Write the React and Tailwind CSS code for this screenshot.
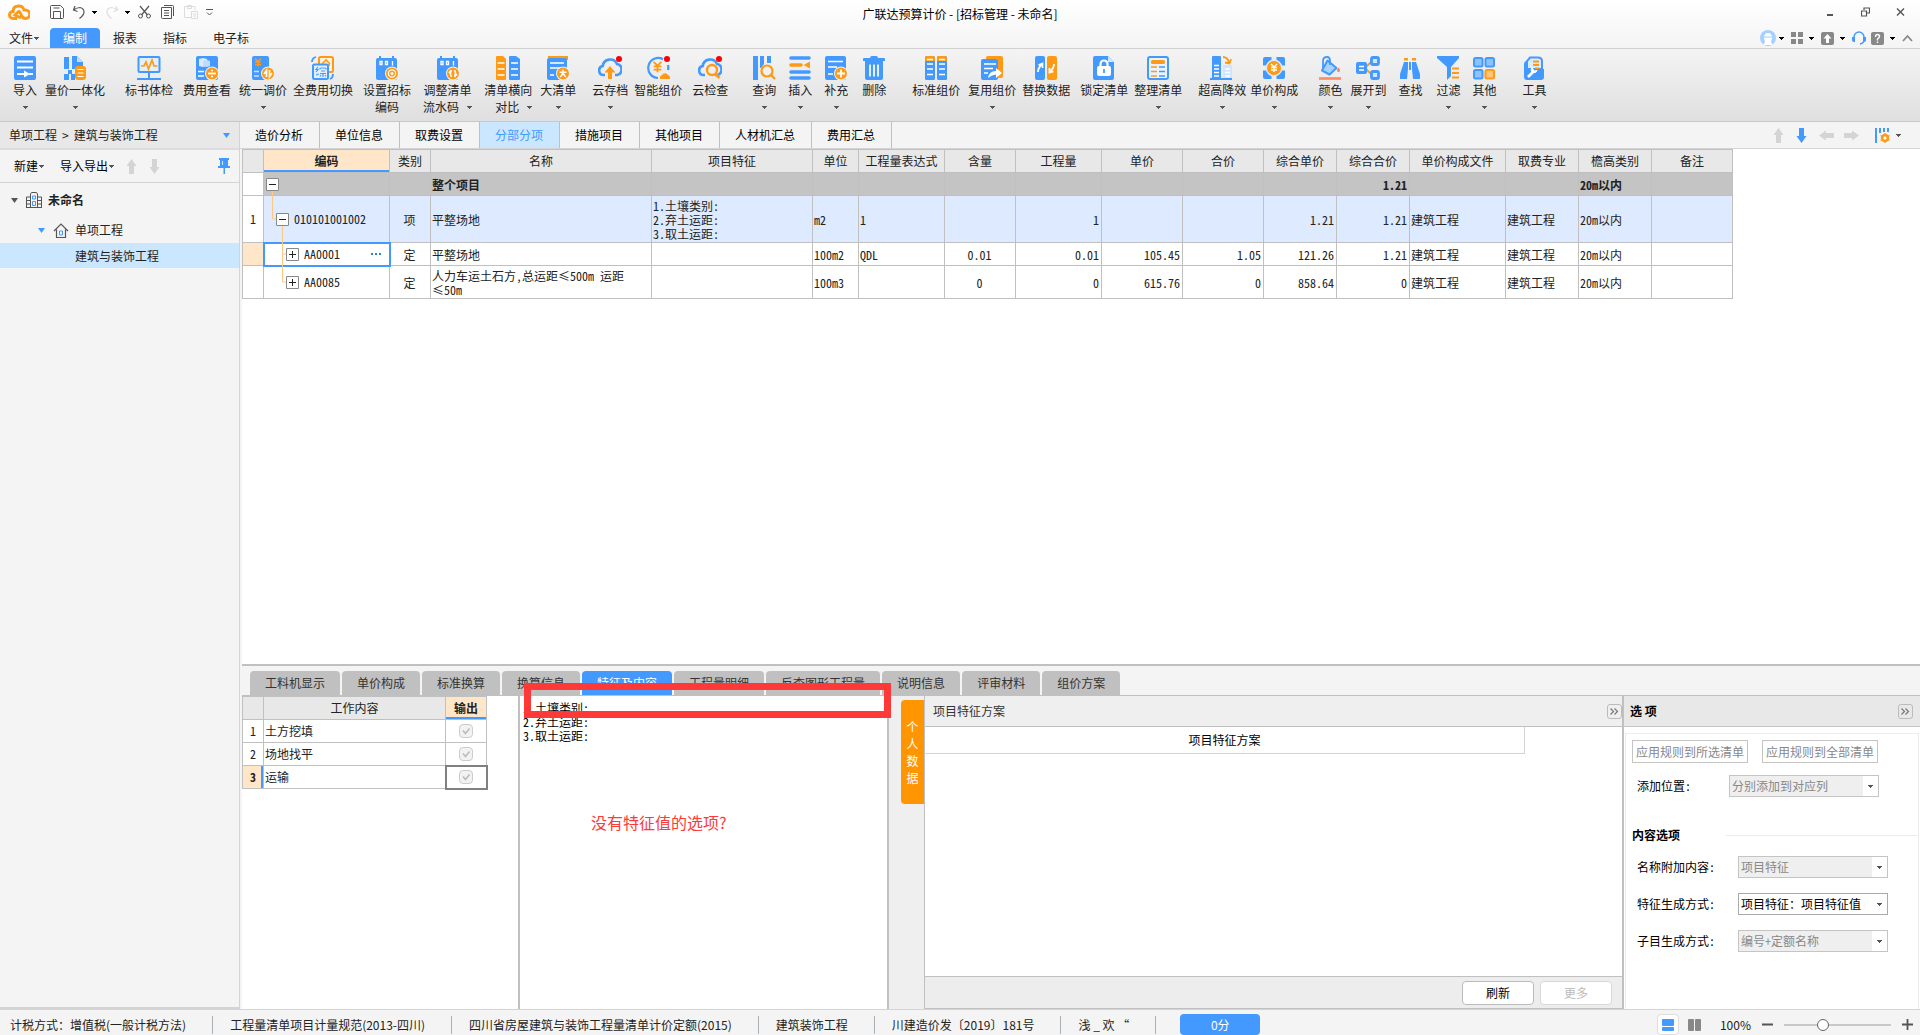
import React, { useState } from "react";

const B = "#4499ff";
const O = "#ff9a17";

/* ---------- shared bits ---------- */

function Caret({ className = "text-[#555]" }) {
  return (
    <svg className={`shrink-0 ${className}`} width="5" height="3" viewBox="0 0 5 3" aria-hidden="true">
      <path d="M0 0h5v1H4v1H3v1H2V2H1V1H0z" fill="currentColor" />
    </svg>
  );
}

function Triangle({ className }) {
  return (
    <svg className={`shrink-0 ${className}`} width="7" height="5" viewBox="0 0 7 5" aria-hidden="true">
      <path d="M0 0h7L3.5 5z" fill="currentColor" />
    </svg>
  );
}

function Arrow({ className = "text-[#d4d4d4]", turn = 0 }) {
  return (
    <svg className={`shrink-0 ${className}`} width="15" height="15" viewBox="0 0 15 15" aria-hidden="true">
      <path
        d="M7.5 0L12.500 7h-2.500v8H5V7H2.500z"
        fill="currentColor"
        transform={`rotate(${turn} 7.5 7.5)`}
      />
    </svg>
  );
}

function Svg({ w = 24, h = 24, children }) {
  return (
    <svg className="block shrink-0" width={w} height={h} viewBox={`0 0 ${w} ${h}`} fill="none" aria-hidden="true">
      {children}
    </svg>
  );
}

// round orange badge in the lower right corner of a ribbon icon
function Badge({ children }) {
  return (
    <>
      <circle cx="17" cy="17.5" r="7" fill="#f2f2f2" />
      <circle cx="17" cy="17.5" r="6" fill={O} />
      {children}
    </>
  );
}

const yen = (x, y, s, color) => (
  <path
    d={`M${x - 3 * s} ${y - 4 * s}L${x} ${y - s}L${x + 3 * s} ${y - 4 * s}M${x} ${y - s}V${y + 4 * s}M${x - 3 * s} ${y - 0.5 * s}H${x + 3 * s}M${x - 3 * s} ${y + 2 * s}H${x + 3 * s}`}
    stroke={color}
    strokeWidth={1.4 * s}
  />
);

const calendar = (
  <>
    <rect x="1" y="2" width="21" height="22" rx="2" fill={B} />
    <path d="M5 0v4M18 0v4" stroke={B} strokeWidth="2" />
    <path d="M5 5.5h2v3H5zM10.5 5.5h2v3h-2zM17.5 5v4.5" stroke="#fff" strokeWidth="1.3" />
  </>
);

const cloud = (
  <path
    d="M7 19H5.5a4.5 4.5 0 0 1-.8-8.9A7.5 7.5 0 0 1 19 8a5.6 5.6 0 0 1 0 11h-2"
    stroke={B}
    strokeWidth="2.6"
  />
);

const redDot = <circle cx="21" cy="3" r="3" fill="#fb0007" />;

const icons = {
  import: (
    <>
      <rect x="1" y="0" width="22" height="24" rx="2" fill={B} />
      <path d="M4 5.500h16M4 11.500h16M4 18h7" stroke="#fff" strokeWidth="1.8" />
      <path d="M11 14.500l6 3.500-6 3.500z" fill="#fff" />
      <path d="M16 18h4" stroke="#fff" strokeWidth="2" />
    </>
  ),
  price: (
    <>
      <path d="M1 1h5v12H1zM1 18h5v6H1zM8 18h4v6H8z" fill={B} />
      <path d="M9 0h5l6 6v4h-5l-3 3H9z" fill={B} />
      <path d="M14 0l6 6h-6z" fill="#bfe0ff" />
      <rect x="5" y="14" width="4" height="4" fill={B} />
      <path d="M7 0v13M0 15.500h4" stroke="#dcecff" strokeWidth="1" />
      <rect x="12" y="10" width="11" height="14" rx="3" fill={O} />
      <path d="M14.500 13.500h6M14.500 17h6M14.500 20.500h6" stroke="#fff" strokeWidth="1.200" />
    </>
  ),
  monitor: (
    <>
      <rect x="1.500" y="1" width="21" height="15" rx="1" fill="#e2effc" stroke={B} strokeWidth="2" />
      <path d="M4 10h3l2-4 2.500 7L15 4l2 6h3.500" stroke={O} strokeWidth="1.700" />
      <path d="M12 16v6M0 23h24" stroke={B} strokeWidth="2" />
    </>
  ),
  feeView: (
    <>
      <rect x="1" y="0" width="22" height="24" rx="2" fill={B} />
      <path d="M4 3l4-1 4 1v7l-4 1-4-1z" fill="#dbeafc" />
      <path d="M8 5l4-1 3 1v5l-3 1-4-1z" fill="#bcdcff" />
      <path d="M3 15.500h6M3 20h6" stroke="#fff" strokeWidth="1.600" />
      <Badge>
        <path d="M13 17.500h8" stroke="#fff" strokeWidth="1.800" />
        <circle cx="17" cy="14.500" r="1.100" fill="#fff" />
        <circle cx="17" cy="20.500" r="1.100" fill="#fff" />
      </Badge>
    </>
  ),
  adjust: (
    <>
      <rect x="1" y="0" width="17" height="24" rx="2" fill={B} />
      {yen(7, 6.5, 1, O)}
      <path d="M3 15.500h5M3 20h5" stroke="#cfe4fb" strokeWidth="1.600" />
      <Badge>
        <path d="M15.500 21v-6.500l-2.500 3.500M18.500 14v6.500L21 17" stroke="#fff" strokeWidth="1.700" />
      </Badge>
    </>
  ),
  swap: (
    <>
      <rect x="8" y="1" width="14" height="15" rx="1.500" fill="#fff3e0" stroke={O} strokeWidth="2" />
      <path d="M11 8l4-4 4 4M12 9h7M15 9v4" stroke={O} strokeWidth="1.600" />
      <rect x="2" y="8.500" width="15" height="14.500" rx="1.500" fill="#e2effc" stroke={B} strokeWidth="2" />
      <path d="M7 11l-2 2.500h2l-2 2.500M5 19l3-1M9.500 12h5M9 12v1.500M15 12v1.500M10 15h4M9 17.500h6M12 17.500V21M10 19l-1 1.500M14 19l1 1.500" stroke={B} strokeWidth="1.200" />
      <path d="M1 6q0-4 4-5M22 18q0 4-3 5" stroke={B} strokeWidth="1.800" />
    </>
  ),
  codeSet: (
    <>
      {calendar}
      <Badge>
        <circle cx="17" cy="17.500" r="3.600" stroke="#fff" strokeWidth="1.200" />
        <circle cx="17" cy="17.500" r="1.500" fill="#fff" />
      </Badge>
    </>
  ),
  codeFlow: (
    <>
      {calendar}
      <Badge>
        <path d="M15.500 21q-2-3.500 0-6.500M13 17l2.500-3M18.500 14q2 3.500 0 6.500M21 18l-2.500 3" stroke="#fff" strokeWidth="1.500" />
      </Badge>
    </>
  ),
  compare: (
    <>
      <path d="M0 1q0-1 1-1h6l3 3v20q0 1-1 1H1q-1 0-1-1z" fill={O} />
      <path d="M13 1q0-1 1-1h6l4 3v20q0 1-1 1h-9q-1 0-1-1z" fill={B} />
      <path d="M1.500 7h7M1.500 13h7M1.500 19h7M15 7h7M15 13h7M15 19h7" stroke="#fff" strokeWidth="1.500" />
    </>
  ),
  bigList: (
    <>
      <path d="M2 0h20v4H2z" fill={O} />
      <rect x="1" y="2" width="20" height="22" rx="2" fill={B} />
      <path d="M4 7h14M4 12h10M4 19h4" stroke="#fff" strokeWidth="1.600" />
      <Badge>
        <path d="M13.500 16.200h7M17 13.500v3q-1 3-3 4.500M17 16.500q1 3 3 4.500" stroke="#fff" strokeWidth="1.400" />
      </Badge>
    </>
  ),
  cloudSave: (
    <>
      {cloud}
      <path d="M12 10l5.500 6.500h-3.500V23h-4v-6.500H6.500z" fill={O} />
      {redDot}
    </>
  ),
  smart: (
    <>
      <path d="M12 22A10 10 0 1 1 17 3.200M22 9a10 10 0 0 1 0 5" stroke={B} strokeWidth="2.200" />
      {yen(11.5, 11, 1.3, O)}
      <path d="M14 23v-2.500l2-1.500a3.500 3.500 0 0 1 6 0l2 1.500V23z" fill={O} />
      {redDot}
    </>
  ),
  cloudCheck: (
    <>
      {cloud}
      <circle cx="14" cy="14" r="6.500" fill="#f0f0f0" />
      <circle cx="14" cy="14" r="5" stroke={O} strokeWidth="2.400" />
      <path d="M17.500 18l4 4" stroke={O} strokeWidth="2.600" />
      {redDot}
    </>
  ),
  query: (
    <>
      <path d="M1 0h5v24H1zM8 0h4v8l-3 4H8zM15 0h4v7h-4z" fill={B} />
      <circle cx="15" cy="15" r="5.500" fill="#f0f0f0" stroke={O} strokeWidth="2.200" />
      <path d="M19 19l4 4" stroke={O} strokeWidth="2.400" />
    </>
  ),
  insert: (
    <>
      <path d="M3 2h18M3 16h18M3 22h18" stroke={B} strokeWidth="3.600" strokeLinecap="round" />
      <path d="M3 9h10" stroke={O} strokeWidth="3.600" strokeLinecap="round" />
      <path d="M22 5.500v7L15.500 9z" fill={O} />
    </>
  ),
  supplement: (
    <>
      <rect x="1" y="0" width="21" height="24" rx="2" fill={B} />
      <path d="M4 5.500h15M4 11h9M4 18h5" stroke="#fff" strokeWidth="1.600" />
      <Badge>
        <path d="M13 17.500h8M17 13.500v8" stroke="#fff" strokeWidth="1.800" />
      </Badge>
    </>
  ),
  trash: (
    <>
      <path d="M8 2q0-2 2-2h4q2 0 2 2h6q1 0 1 1v2H1V3q0-1 1-1z" fill={B} />
      <path d="M3 5h18v17q0 2-2 2H5q-2 0-2-2z" fill={B} />
      <path d="M8 8.500v12M12 8.500v12M16 8.500v12" stroke="#fff" strokeWidth="1.700" />
    </>
  ),
  standard: (
    <>
      <rect x="1" y="0" width="10" height="24" rx="1.500" fill={B} />
      <rect x="13" y="0" width="10" height="24" rx="1.500" fill={B} />
      <path d="M1 5V2q0-2 2-2h6q2 0 2 2v3zM13 5V2q0-2 2-2h6q2 0 2 2v3z" fill={O} />
      <path d="M3 3.500h6M3 8h6M3 13h6M3 18.500h6M15 3.500h6M15 8h6M15 13h6M15 18.500h6" stroke="#fff" strokeWidth="1.400" />
    </>
  ),
  reuse: (
    <>
      <rect x="6" y="0" width="17" height="22" rx="2" fill={O} />
      <rect x="1" y="3" width="17" height="21" rx="2" fill={B} />
      <path d="M4 8h12M4 12.500h9M4 17h4" stroke="#fff" strokeWidth="1.600" />
      <path d="M8 22q1-7 8-7v-3l6 5-6 5v-3.500q-4 0-8 3.500z" fill="#fff" />
    </>
  ),
  replace: (
    <>
      <rect x="1" y="0" width="10" height="24" rx="2" fill={B} />
      <rect x="13" y="0" width="10" height="24" rx="2" fill={O} />
      <path d="M4 16q0-4 4-8M4.500 9L8.500 7.500V12M20 8q0 4-4 8M15.500 12v4.500l4-1" stroke="#fff" strokeWidth="1.800" />
    </>
  ),
  lock: (
    <>
      <path d="M3 0h13l6 6v16q0 2-2 2H3q-2 0-2-2V2q0-2 2-2z" fill={B} />
      <path d="M16 0l6 6h-6z" fill="#cfe6ff" />
      <rect x="5" y="10" width="14" height="10" rx="2" fill="#fff" />
      <path d="M8.500 10V8a3.500 3.500 0 0 1 7 0v2" stroke="#fff" strokeWidth="2.200" />
      <path d="M12 13v4" stroke={B} strokeWidth="1.800" />
    </>
  ),
  tidy: (
    <>
      <rect x="2" y="1" width="20" height="22" rx="2" fill="#e8f3ff" stroke={B} strokeWidth="2" />
      <rect x="5" y="4" width="14" height="4" rx="1.500" fill={O} />
      <path d="M5 11h6M5 15.500h6M5 20h6" stroke={O} strokeWidth="1.700" />
      <path d="M13 11h6M13 15.500h6M13 20h6" stroke={B} strokeWidth="1.700" />
    </>
  ),
  building: (
    <>
      <rect x="2" y="0" width="9" height="23" rx="1" fill={B} />
      <rect x="13" y="9" width="9" height="14" fill="#cfe6ff" />
      <path d="M4 9.500h5M4 13h5M4 16.500h5M4 20h5M15 13h5M15 16.500h5M15 20h5" stroke="#fff" strokeWidth="1.300" />
      <path d="M0 23h22" stroke={B} strokeWidth="2" />
      <path d="M13 1q4.500 0 6 5.500M15 6.500l4.500 1L21 3" stroke={O} strokeWidth="1.800" />
    </>
  ),
  compose: (
    <>
      <path d="M3 1h18q2 0 2 2v18q0 2-2 2H3q-2 0-2-2V3q0-2 2-2z" fill={B} />
      <path d="M9.500 0h5v4h-5zM9.500 20h5v4h-5zM0 9.500h4v5H0zM20 9.500h4v5h-4z" fill="#eee" />
      <circle cx="12" cy="12" r="8.500" fill="#dcebfa" />
      <circle cx="12" cy="12" r="7" fill={O} />
      {yen(12, 12, 1, "#fff")}
    </>
  ),
  color: (
    <>
      <path d="M9.500 4.500L18.500 12l-7 6.500-7.500-4z" fill="#a8d2ff" stroke={B} strokeWidth="2" strokeLinejoin="round" />
      <path d="M5 12V5q0-4 4-4 3 0 3 4v4" stroke={B} strokeWidth="1.800" />
      <path d="M20.500 12q2 3 0 4-2-1 0-4z" fill="#ff7a55" stroke="#ff7a55" />
      <path d="M1 22.500h22" stroke="#ff8866" strokeWidth="2.600" />
    </>
  ),
  expand: (
    <>
      <path d="M9 12l7-7M9 12l7 7" stroke={O} strokeWidth="1.800" />
      <rect x="0" y="6" width="11" height="12" rx="2" fill={B} />
      <path d="M3 10.500h5M3 14h5" stroke="#fff" strokeWidth="1.500" />
      <rect x="15.500" y="1.500" width="7" height="7" rx="1.500" fill="#cfe6ff" stroke={B} strokeWidth="2.800" />
      <rect x="15.500" y="15.500" width="7" height="7" rx="1.500" fill="#cfe6ff" stroke={B} strokeWidth="2.800" />
    </>
  ),
  find: (
    <>
      <path d="M6 2h4v2.500H6zM14 2h4v2.500h-4z" fill={O} />
      <path d="M6 6h4v7l-1 10H2v-5zM14 6h4l4 12v5h-7l-1-10z" fill={B} />
      <path d="M11 6v8h2V6z" fill={B} />
    </>
  ),
  filter: (
    <>
      <path d="M1 0h22v2l-8 9v9l-4 4V11L1 2z" fill={B} />
      <path d="M16 12.500h7M16 17h7M16 21.500h7" stroke={O} strokeWidth="2" />
    </>
  ),
  others: (
    <>
      <rect x="2" y="2" width="8.500" height="8.500" rx="1.500" fill="#8cc3ff" stroke={B} strokeWidth="2" />
      <rect x="13.500" y="2" width="8.500" height="8.500" rx="1.500" fill="#8cc3ff" stroke={B} strokeWidth="2" />
      <rect x="2" y="14" width="8.500" height="8.500" rx="1.500" fill="#8cc3ff" stroke={B} strokeWidth="2" />
      <rect x="13.500" y="14" width="8.500" height="8.500" rx="1.500" fill="#ffc57a" stroke={O} strokeWidth="2" />
    </>
  ),
  tools: (
    <>
      <path d="M8 1.500h8q4 0 4 4V13H5V5z" fill="#dcecff" stroke={B} strokeWidth="2" />
      <path d="M11 5.500h6M11 9h6M13 12.500h4" stroke={O} strokeWidth="1.800" />
      <path d="M2 8q0-3 3-3v8h17v8q0 3-3 3H5q-3 0-3-3z" fill={B} />
      <path d="M6 21l5-5" stroke="#fff" strokeWidth="2.600" />
      <path d="M10 11.500q-2 4 1 5t4-2l-2.500.500-1-1z" fill="#fff" stroke="#fff" />
    </>
  ),
};

/* ---------- title bar + menu ---------- */

const menuTabs = ["编制", "报表", "指标", "电子标"];

function QuickAccess() {
  const btn = "flex items-center";
  return (
    <div className="flex h-6 items-center pl-2 text-[#555]">
      <Svg w={22} h={17}>
        <path
          d="M9 14.500H5a3.500 3.500 0 0 1 0-7q0-5.500 6-5.500 4 0 5 4h1.500a4 4 0 0 1 0 8.500q-3 0-4.500-4T10 8l-3 3 6 3"
          stroke={O}
          strokeWidth="3"
        />
      </Svg>
      <button type="button" aria-label="保存" className={`${btn} ml-5`}>
        <Svg w={14} h={14}>
          <path d="M.5 1.500q0-1 1-1h9l3 3v9q0 1-1 1h-11q-1 0-1-1zM3.500 13V6.500h7V13M3.500 3h6" stroke="currentColor" />
        </Svg>
      </button>
      <button type="button" aria-label="撤销" className={`${btn} ml-2 gap-1.5`}>
        <Svg w={14} h={14}>
          <path d="M3 1L1.500 5 5.500 6.500M1.500 5Q5 2.500 8 2.500q4 1 4 4.500 0 3-4.500 6.500" stroke="currentColor" strokeWidth="1.200" />
        </Svg>
        <Caret className="text-black" />
      </button>
      <button type="button" aria-label="重做" className={`${btn} ml-2 gap-1.5 text-[#ddd]`}>
        <Svg w={14} h={14}>
          <path d="M11 1l1.500 4-4 1.500M12.500 5Q9 2.500 6 2.500 2 3.500 2 7q0 3 4.500 6.500" stroke="currentColor" strokeWidth="1.200" />
        </Svg>
        <Caret className="text-black" />
      </button>
      <button type="button" aria-label="剪切" className={`${btn} ml-2`}>
        <Svg w={13} h={14}>
          <path d="M2 1l7.500 9M11 1L3.500 10" stroke="currentColor" strokeWidth="1.200" />
          <circle cx="2.500" cy="11" r="2" stroke="currentColor" />
          <circle cx="10.500" cy="11" r="2" stroke="currentColor" />
        </Svg>
      </button>
      <button type="button" aria-label="复制" className={`${btn} ml-2.5`}>
        <Svg w={13} h={14}>
          <path d="M3 .5h8.500q1 0 1 1V11M.5 2.500h10v11H1.500q-1 0-1-1zM3 5.500h5M3 8h5M3 10.500h5" stroke="currentColor" />
        </Svg>
      </button>
      <button type="button" aria-label="粘贴" className={`${btn} ml-2.5 text-[#ddd]`}>
        <Svg w={14} h={14}>
          <path d="M7 12.500H.5v-11H11V5M3.500.5h4v3h-4zM7.500 6.500h6v7h-6zM9 9h3M9 11h3" stroke="currentColor" />
        </Svg>
      </button>
      <button type="button" aria-label="自定义" className={`${btn} ml-2`}>
        <Svg w={7} h={7}>
          <path d="M0 .5h7M1 3.500l2.500 2.500L6 3.500" stroke="currentColor" />
        </Svg>
      </button>
    </div>
  );
}

function TitleBar() {
  const [active, setActive] = useState("编制");
  return (
    <header className="border-b border-[#d0d0d0] bg-gradient-to-b from-white to-[#f4f4f4]">
      <div className="grid h-7 grid-cols-[1fr_auto_1fr]">
        <QuickAccess />
        <h1 className="self-center text-black">广联达预算计价 - [招标管理 - 未命名]</h1>
        <div className="flex h-6 items-center justify-end gap-[26px] pr-[15px] text-[#555]">
          <button type="button" aria-label="最小化">
            <Svg w={9} h={10}>
              <path d="M1 8h6" stroke="currentColor" strokeWidth="2" />
            </Svg>
          </button>
          <button type="button" aria-label="还原">
            <Svg w={9} h={10}>
              <path d="M3 3V1h5.500v5H6M.5 4h5v5h-5z" stroke="currentColor" strokeWidth="1.200" />
            </Svg>
          </button>
          <button type="button" aria-label="关闭">
            <Svg w={9} h={10}>
              <path d="M1 1.500l7 7M8 1.500l-7 7" stroke="currentColor" strokeWidth="1.400" />
            </Svg>
          </button>
        </div>
      </div>
      <div className="flex h-5 items-stretch justify-between">
        <nav className="flex text-[#222]">
          <button type="button" className="flex w-[50px] items-center gap-px pl-[9px]">
            文件
            <Caret />
          </button>
          {menuTabs.map((t) => (
            <button
              key={t}
              type="button"
              onClick={() => setActive(t)}
              className={`rounded-t-sm px-[13px] ${t === active ? "bg-[#4499ff] text-white" : ""}`}
            >
              {t}
            </button>
          ))}
        </nav>
        <div className="flex items-center pr-[7px] text-[#888]">
          <button type="button" aria-label="用户" className="flex items-center gap-[3px]">
            <Svg w={16} h={16}>
              <circle cx="8" cy="8" r="8" fill="#a5d0ff" />
              <path d="M4 8q0-5 4-5t4 5l-1 4 2 3H3l2-3z" fill="#fff" />
              <path d="M4 7h8" stroke="#a5d0ff" />
            </Svg>
            <Caret className="text-black" />
          </button>
          <button type="button" aria-label="应用" className="ml-[7px] flex items-center gap-1.5">
            <Svg w={12} h={12}>
              <path d="M0 0h5v5H0zM7 0h5v5H7zM0 7h5v5H0zM7 7h5v5H7z" fill="currentColor" />
            </Svg>
            <Caret className="text-black" />
          </button>
          <button type="button" aria-label="上传" className="ml-[7px] flex items-center gap-1.5">
            <Svg w={13} h={13}>
              <rect width="13" height="13" rx="2" fill="currentColor" />
              <path d="M6.500 2l4 4.500h-2.500V11H5V6.500H2.500z" fill="#fff" />
            </Svg>
            <Caret className="text-black" />
          </button>
          <button type="button" aria-label="客服" className="ml-[7px]">
            <Svg w={14} h={14}>
              <path d="M2 8V6a5 5 0 0 1 10 0v3q0 3-4 4" stroke={B} strokeWidth="1.400" />
              <path d="M0 6h3v5H2q-2 0-2-2zM11 6h3v3q0 2-2 2h-1z" fill={B} />
            </Svg>
          </button>
          <button type="button" aria-label="帮助" className="ml-[5px] flex items-center gap-1.5">
            <Svg w={13} h={13}>
              <rect width="13" height="13" rx="2" fill="currentColor" />
              <path d="M4.500 5q0-2.500 2-2.500t2 2q0 1-2 2.500v1.500M6.500 9.500V11" stroke="#fff" strokeWidth="1.400" />
            </Svg>
            <Caret className="text-black" />
          </button>
          <button type="button" aria-label="收起功能区" className="ml-[7px]">
            <Svg w={11} h={8}>
              <path d="M1 7l4.500-5L10 7" stroke="currentColor" strokeWidth="1.800" />
            </Svg>
          </button>
        </div>
      </div>
    </header>
  );
}

/* ---------- ribbon ---------- */

const ribbon = [
  { icon: "import", label: "导入", caret: true, space: "ml-[13px]" },
  { icon: "price", label: "量价一体化", caret: true, space: "ml-2" },
  { icon: "monitor", label: "标书体检", space: "ml-5" },
  { icon: "feeView", label: "费用查看", space: "ml-2.5" },
  { icon: "adjust", label: "统一调价", caret: true, space: "ml-2" },
  { icon: "swap", label: "全费用切换", space: "ml-1.5" },
  { icon: "codeSet", label: "设置招标", second: "编码", space: "ml-2.5" },
  { icon: "codeFlow", label: "调整清单", second: "流水码", caret: true, space: "ml-3" },
  { icon: "compare", label: "清单横向", second: "对比", caret: true, space: "ml-3" },
  { icon: "bigList", label: "大清单", caret: true, space: "ml-2" },
  { icon: "cloudSave", label: "云存档", caret: true, space: "ml-4" },
  { icon: "smart", label: "智能组价", space: "ml-1.5" },
  { icon: "cloudCheck", label: "云检查", space: "ml-2.5" },
  { icon: "query", label: "查询", caret: true, space: "ml-6" },
  { icon: "insert", label: "插入", caret: true, space: "ml-3" },
  { icon: "supplement", label: "补充", caret: true, space: "ml-3" },
  { icon: "trash", label: "删除", space: "ml-3.5" },
  { icon: "standard", label: "标准组价", space: "ml-6.5" },
  { icon: "reuse", label: "复用组价", caret: true, space: "ml-2" },
  { icon: "replace", label: "替换数据", space: "ml-1.5" },
  { icon: "lock", label: "锁定清单", space: "ml-2.5" },
  { icon: "tidy", label: "整理清单", caret: true, space: "ml-1.5" },
  { icon: "building", label: "超高降效", caret: true, space: "ml-4" },
  { icon: "compose", label: "单价构成", caret: true, space: "ml-1" },
  { icon: "color", label: "颜色", caret: true, space: "ml-5" },
  { icon: "expand", label: "展开到", caret: true, space: "ml-2" },
  { icon: "find", label: "查找", space: "ml-3" },
  { icon: "filter", label: "过滤", caret: true, space: "ml-3.5" },
  { icon: "others", label: "其他", caret: true, space: "ml-3" },
  { icon: "tools", label: "工具", caret: true, space: "ml-6.5" },
];

function Ribbon() {
  return (
    <div className="flex h-[73px] items-start border-b border-[#c8c8c8] bg-gradient-to-b from-[#f4f4f4] to-[#dfdfdf] pt-[7px] text-[#222]">
      {ribbon.map((r) => (
        <button
          key={r.label}
          type="button"
          className={`flex shrink-0 flex-col items-center leading-4 whitespace-nowrap ${r.space}`}
        >
          <Svg>{icons[r.icon]}</Svg>
          <span className="mt-0.5">{r.label}</span>
          {(r.second || r.caret) && (
            <span
              className={`mt-px flex h-4 w-full items-center ${r.second && r.caret ? "justify-end gap-2" : "justify-center"}`}
            >
              {r.second}
              {r.caret && <Caret />}
            </span>
          )}
        </button>
      ))}
    </div>
  );
}

/* ---------- project tree ---------- */

function Sidebar() {
  return (
    <aside className="flex w-60 shrink-0 flex-col border-r border-b-2 border-[#d4d4d4] bg-[#f4f4f4] text-[#222]">
      <button
        type="button"
        className="flex h-7 shrink-0 items-center justify-between border-b-2 border-[#dcdcdc] bg-[#e8e8e8] pr-[9px] pl-[9px]"
      >
        <span className="flex gap-[5px]">
          <span>单项工程</span>
          <span>&gt;</span>
          <span>建筑与装饰工程</span>
        </span>
        <Triangle className="text-[#4499ff]" />
      </button>
      <div className="flex h-[33px] shrink-0 items-center border-b border-[#d4d4d4] pr-2 pl-3.5">
        <button type="button" className="flex items-center gap-px text-black">
          新建 <Caret />
        </button>
        <button type="button" className="ml-4 flex items-center gap-px text-black">
          导入导出 <Caret />
        </button>
        <button type="button" aria-label="上移" className="ml-2.5">
          <Arrow />
        </button>
        <button type="button" aria-label="下移" className="ml-2">
          <Arrow turn={180} />
        </button>
        <button type="button" aria-label="固定" className="ml-auto">
          <Svg w={14} h={16}>
            <path d="M2 0h10v2H2zM3 2h8v6H3zM1 8h12v2H1zM6.500 10h1.500v6H6.500z" fill={B} />
            <path d="M5.500 3v4" stroke="#cfe6ff" />
          </Svg>
        </button>
      </div>
      <ul>
        <li className="flex h-[34px] items-center pl-[11px] font-bold">
          <Triangle className="text-[#555]" />
          <span className="mr-1.5 ml-2">
            <Svg w={16} h={16}>
              <path d="M4.500 15V2l1-1.500h5l1 1.500v13M4.500 5h-4v10M11.500 5h4v10M0 15.500h16M0 8.500h4M0 12h4M12 8.500h4M12 12h4" stroke="#555" />
              <path d="M6.500 4h3v3h-3zM6.500 9.500h3v4h-3z" stroke={B} />
            </Svg>
          </span>
          未命名
        </li>
        <li className="flex h-[26px] items-center pl-[38px]">
          <Triangle className="text-[#4499ff]" />
          <span className="mr-1.5 ml-2">
            <Svg w={16} h={15}>
              <path d="M1 8l7-7 7 7M3.500 6.500v8h9v-8" stroke="#555" strokeWidth="1.200" />
              <path d="M6.500 8h3v4h-3z" stroke={B} />
            </Svg>
          </span>
          单项工程
        </li>
        <li className="flex h-[25px] items-center bg-[#cbe7ff] pl-[75px]">建筑与装饰工程</li>
      </ul>
    </aside>
  );
}

/* ---------- main grid ---------- */

const sheetTabs = ["造价分析", "单位信息", "取费设置", "分部分项", "措施项目", "其他项目", "人材机汇总", "费用汇总"];

function SheetTabs() {
  const [active, setActive] = useState("分部分项");
  return (
    <div className="flex h-[27px] shrink-0 items-stretch justify-between border-b border-[#d4d4d4] bg-[#f4f4f4]">
      <div className="flex">
        {sheetTabs.map((t) => (
          <button
            key={t}
            type="button"
            onClick={() => setActive(t)}
            className={`border-r border-[#c0c0c0] pr-4 pl-[15px] ${t === active ? "bg-[#cbe7ff] text-[#4499ff]" : "text-black"}`}
          >
            {t}
          </button>
        ))}
      </div>
      <div className="flex items-center gap-2 pr-[19px]">
        <button type="button" aria-label="上移">
          <Arrow />
        </button>
        <button type="button" aria-label="下移">
          <Arrow turn={180} className="text-[#4499ff]" />
        </button>
        <button type="button" aria-label="左移" className="ml-0.5">
          <Arrow turn={270} />
        </button>
        <button type="button" aria-label="右移" className="ml-0.5">
          <Arrow turn={90} />
        </button>
        <button type="button" aria-label="列设置" className="ml-2 flex items-center gap-1.5">
          <Svg w={15} h={15}>
            <path d="M1 0v15M5 0v5M9 0v4M13 0v4" stroke={B} strokeWidth="2" />
            <circle cx="10" cy="10" r="3" stroke={O} strokeWidth="2.400" />
            <path d="M10 5v10M5.500 7.500l9 5M5.500 12.500l9-5" stroke={O} strokeWidth="1.200" />
            <circle cx="10" cy="10" r="1.500" fill="#fff" />
          </Svg>
          <Caret />
        </button>
      </div>
    </div>
  );
}

const columns = [
  { key: "no", title: "", w: "w-[21px]", align: "text-center" },
  { key: "code", title: "编码", w: "w-[126px]", align: "text-left" },
  { key: "kind", title: "类别", w: "w-[41px]", align: "text-center" },
  { key: "name", title: "名称", w: "w-[221px]", align: "text-left" },
  { key: "feature", title: "项目特征", w: "w-[161px]", align: "text-left" },
  { key: "unit", title: "单位", w: "w-[46px]", align: "text-left" },
  { key: "expr", title: "工程量表达式", w: "w-[86px]", align: "text-left" },
  { key: "content", title: "含量", w: "w-[71px]", align: "text-center" },
  { key: "qty", title: "工程量", w: "w-[86px]", align: "text-right" },
  { key: "price", title: "单价", w: "w-[81px]", align: "text-right" },
  { key: "total", title: "合价", w: "w-[81px]", align: "text-right" },
  { key: "unitSum", title: "综合单价", w: "w-[73px]", align: "text-right" },
  { key: "sum", title: "综合合价", w: "w-[73px]", align: "text-right" },
  { key: "file", title: "单价构成文件", w: "w-[96px]", align: "text-left" },
  { key: "major", title: "取费专业", w: "w-[73px]", align: "text-left" },
  { key: "eaves", title: "檐高类别", w: "w-[73px]", align: "text-left" },
  { key: "note", title: "备注", w: "w-[81px]", align: "text-center" },
];

const rows = [
  {
    id: "root",
    tone: "h-[23px] bg-[#c4c4c4] font-bold",
    indent: "pl-0.5",
    open: true,
    name: "整个项目",
    sum: "1.21",
    eaves: "20m以内",
  },
  {
    id: "item",
    tone: "h-[47px] bg-[#deeaff]",
    indent: "pl-3",
    open: true,
    no: "1",
    code: "010101001002",
    kind: "项",
    name: "平整场地",
    feature: "1.土壤类别:\n2.弃土运距:\n3.取土运距:",
    unit: "m2",
    expr: "1",
    qty: "1",
    unitSum: "1.21",
    sum: "1.21",
    file: "建筑工程",
    major: "建筑工程",
    eaves: "20m以内",
  },
  {
    id: "aa0001",
    tone: "h-[23px] bg-white",
    indent: "pl-[22px]",
    selected: true,
    code: "AA0001",
    kind: "定",
    name: "平整场地",
    unit: "100m2",
    expr: "QDL",
    content: "0.01",
    qty: "0.01",
    price: "105.45",
    total: "1.05",
    unitSum: "121.26",
    sum: "1.21",
    file: "建筑工程",
    major: "建筑工程",
    eaves: "20m以内",
  },
  {
    id: "aa0085",
    tone: "h-[33px] bg-white",
    indent: "pl-[22px]",
    code: "AA0085",
    kind: "定",
    name: "人力车运土石方,总运距≤500m 运距\n≤50m",
    unit: "100m3",
    content: "0",
    qty: "0",
    price: "615.76",
    total: "0",
    unitSum: "858.64",
    sum: "0",
    file: "建筑工程",
    major: "建筑工程",
    eaves: "20m以内",
  },
];

function ExpandBox({ open }) {
  return (
    <button type="button" aria-label={open ? "折叠" : "展开"} className="bg-white text-[#222]">
      <Svg w={13} h={13}>
        <path d="M.5.5h12v12H.5z" stroke="#888" />
        <path d={open ? "M3 6.500h7" : "M3 6.500h7M6.500 3v7"} stroke="currentColor" />
      </Svg>
    </button>
  );
}

function BillGrid() {
  const cell = "border border-[#c0c0c0] p-0";
  return (
    <div className="min-h-0 flex-1 overflow-auto border-l-2 border-[#f4f4f4] bg-white">
      <table className="w-[1491px] table-fixed border-collapse font-['Noto_Sans_Mono_CJK_SC','Noto_Sans_CJK_SC',monospace] leading-[14px] text-[#222]">
        <colgroup>
          {columns.map((c) => (
            <col key={c.key} className={c.w} />
          ))}
        </colgroup>
        <thead>
          <tr className="h-[23px] bg-[#e8e8e8]">
            {columns.map((c) => (
              <th
                key={c.key}
                className={`${cell} ${c.key === "code" ? "bg-[#ffe6c8] font-bold shadow-[inset_0_-2px_0_#4499ff]" : "font-normal"}`}
              >
                {c.title}
              </th>
            ))}
          </tr>
        </thead>
        <tbody>
          {rows.map((r) => (
            <tr key={r.id} className={r.tone}>
              <td className={`${cell} text-center ${r.selected ? "bg-[#ffe6c8]" : "bg-white"}`}>{r.no}</td>
              <td
                className={`${cell} relative ${r.selected ? "outline-2 -outline-offset-1 outline-[#4499ff]" : ""}`}
              >
                {r.id === "root" && (
                  <svg
                    className="pointer-events-none absolute top-0 left-0 z-10"
                    width="30"
                    height="110"
                    viewBox="0 0 30 110"
                    fill="none"
                    aria-hidden="true"
                  >
                    <path d="M8.500 18v28H12M18.500 53v56H22M18.500 81H22" stroke="#ffc983" />
                  </svg>
                )}
                <div className={`flex items-center gap-[5px] ${r.indent}`}>
                  <ExpandBox open={r.open} />
                  <span>{r.code}</span>
                  {r.selected && (
                    <button type="button" aria-label="更多" className="mr-[7px] ml-auto text-[#2f80d0]">
                      <Svg w={11} h={3}>
                        <path d="M0 0h2v2H0zM4 0h2v2H4zM8 0h2v2H8z" fill="currentColor" />
                      </Svg>
                    </button>
                  )}
                </div>
              </td>
              {columns.slice(2).map((c) => (
                <td key={c.key} className={`${cell} pt-px pr-0.5 pl-px whitespace-pre ${c.align}`}>
                  {r[c.key]}
                </td>
              ))}
            </tr>
          ))}
        </tbody>
      </table>
    </div>
  );
}

/* ---------- bottom panel ---------- */

const detailTabs = [
  "工料机显示",
  "单价构成",
  "标准换算",
  "换算信息",
  "特征及内容",
  "工程量明细",
  "反查图形工程量",
  "说明信息",
  "评审材料",
  "组价方案",
];

const works = ["土方挖填", "场地找平", "运输"];

function WorkTable() {
  const cell = "border border-[#c0c0c0] p-0";
  return (
    <div className="w-[278px] shrink-0 border-r-2 border-[#c0c0c0] bg-white">
      <table className="w-[244px] table-fixed border-collapse font-['Noto_Sans_Mono_CJK_SC','Noto_Sans_CJK_SC',monospace] leading-[14px] text-[#222]">
        <colgroup>
          <col className="w-[21px]" />
          <col className="w-[182px]" />
          <col className="w-[41px]" />
        </colgroup>
        <thead>
          <tr className="h-[23px] bg-[#e8e8e8]">
            <th className={cell} />
            <th className={`${cell} font-normal`}>工作内容</th>
            <th className={`${cell} bg-[#ffe6c8] font-bold shadow-[inset_0_-2px_0_#4499ff]`}>输出</th>
          </tr>
        </thead>
        <tbody>
          {works.map((w, i) => {
            const current = i === works.length - 1;
            return (
              <tr key={w} className="h-[23px]">
                <td
                  className={`${cell} text-center ${current ? "bg-[#ffe6c8] font-bold shadow-[inset_-2px_0_0_#4499ff]" : ""}`}
                >
                  {i + 1}
                </td>
                <td className={`${cell} pr-0.5 pl-px`}>{w}</td>
                <td className={`${cell} ${current ? "outline-2 -outline-offset-1 outline-[#808080]" : ""}`}>
                  <div className="relative mx-auto size-[14px]">
                    <input
                      type="checkbox"
                      checked
                      disabled
                      readOnly
                      aria-label={w}
                      className="block size-[14px] appearance-none rounded-sm border border-[#ccc] bg-[#f2f2f2]"
                    />
                    <svg className="pointer-events-none absolute inset-0" width="14" height="14" viewBox="0 0 14 14" fill="none" aria-hidden="true">
                      <path d="M4 6.500L6.500 9.500l4-5" stroke="#bbb" strokeWidth="1.600" />
                    </svg>
                  </div>
                </td>
              </tr>
            );
          })}
        </tbody>
      </table>
    </div>
  );
}

function MoreButton() {
  return (
    <button
      type="button"
      aria-label="展开面板"
      className="flex size-[15px] items-center justify-center rounded-[3px] border border-[#bbb] text-[#777]"
    >
      <Svg w={9} h={7}>
        <path d="M.5.5l3 3-3 3M4.500.5l3 3-3 3" stroke="currentColor" strokeWidth="1.200" />
      </Svg>
    </button>
  );
}

function SchemePanel() {
  return (
    <div className="flex min-w-0 flex-1 flex-col border-r-2 border-b border-l border-[#c0c0c0] bg-white">
      <div className="flex h-[31px] shrink-0 items-center justify-between border-b border-[#c0c0c0] bg-[#efefef] pl-2 text-[#333]">
        <h2>项目特征方案</h2>
        <MoreButton />
      </div>
      <div className="flex-1">
        <table className="w-[600px]">
          <thead>
            <tr>
              <th className="h-[26px] border-r border-b border-[#d4d4d4] p-0 font-normal text-black">项目特征方案</th>
            </tr>
          </thead>
        </table>
      </div>
      <div className="flex h-8 shrink-0 items-center justify-end gap-1.5 border-t border-[#c0c0c0] bg-[#ededed] pr-2.5">
        <button type="button" className="h-6 w-[72px] rounded-sm border border-[#bbb] bg-white text-black">
          刷新
        </button>
        <button type="button" disabled className="h-6 w-[72px] rounded-sm border border-[#d8d8d8] bg-white text-[#bbb]">
          更多
        </button>
      </div>
    </div>
  );
}

function Combo({ id, value, disabled }) {
  return (
    <div className="relative w-[150px]">
      <select
        id={id}
        disabled={disabled}
        defaultValue={value}
        className={`block h-[22px] w-full appearance-none border py-0 pr-4 pl-0.5 opacity-100 ${
          disabled ? "border-[#c4c4c4] bg-[#efefef] text-[#888]" : "border-[#aaa] bg-white text-black"
        }`}
      >
        <option>{value}</option>
      </select>
      <span className="pointer-events-none absolute inset-y-px right-px flex w-[15px] items-center justify-center bg-white">
        <Caret />
      </span>
    </div>
  );
}

const contentOptions = [
  { id: "name-extra", label: "名称附加内容:", value: "项目特征", disabled: true },
  { id: "feature-mode", label: "特征生成方式:", value: "项目特征：项目特征值", disabled: false },
  { id: "child-mode", label: "子目生成方式:", value: "编号+定额名称", disabled: true },
];

function OptionsPanel() {
  const apply = "h-[23px] w-[116px] border border-[#c4c4c4] bg-white text-[#888]";
  return (
    <div className="flex w-[296px] shrink-0 flex-col bg-white">
      <div className="flex h-[31px] shrink-0 items-center justify-between border-b border-[#c4c4c4] bg-[#e8e8e8] pr-[7px] pl-1.5">
        <h2 className="font-bold text-black">选 项</h2>
        <MoreButton />
      </div>
      <div className="mx-px mt-1.5 flex-1 border border-b-0 border-[#ececec] pt-1.5 pl-1.5 font-['Noto_Sans_Mono_CJK_SC','Noto_Sans_CJK_SC',monospace] text-black">
        <div className="flex gap-[14px]">
          <button type="button" className={apply} disabled>
            应用规则到所选清单
          </button>
          <button type="button" className={apply} disabled>
            应用规则到全部清单
          </button>
        </div>
        <div className="mt-3 flex items-center pl-[5px]">
          <label htmlFor="add-pos" className="w-[92px]">
            添加位置:
          </label>
          <Combo id="add-pos" value="分别添加到对应列" disabled />
        </div>
        <div className="mt-[29px] flex items-center">
          <h3 className="w-[94px] leading-[18px] font-bold">内容选项</h3>
          <hr className="flex-1 border-[#ececec]" />
        </div>
        <div className="mt-3 flex flex-col gap-[15px] pl-[5px]">
          {contentOptions.map((o) => (
            <div key={o.id} className="flex items-center">
              <label htmlFor={o.id} className="w-[101px]">
                {o.label}
              </label>
              <Combo id={o.id} value={o.value} disabled={o.disabled} />
            </div>
          ))}
        </div>
      </div>
    </div>
  );
}

function DetailPanel() {
  const [active, setActive] = useState("特征及内容");
  return (
    <section className="relative ml-0.5 flex h-[345px] shrink-0 flex-col border-t-2 border-[#c0c0c0]">
      <div className="flex h-[30px] shrink-0 items-end gap-0.5 border-b border-[#c0c0c0] bg-[#f4f4f4] pl-2">
        {detailTabs.map((t) => (
          <button
            key={t}
            type="button"
            onClick={() => setActive(t)}
            className={`h-6 rounded-t-sm px-[15px] ${t === active ? "bg-[#4499ff] text-white" : "bg-[#c0c0c0] text-[#333]"}`}
          >
            {t}
          </button>
        ))}
      </div>
      <div className="flex min-h-0 flex-1">
        <WorkTable />
        <textarea
          aria-label="特征"
          defaultValue={"1.土壤类别:\n2.弃土运距:\n3.取土运距:"}
          className="w-[369px] shrink-0 resize-none border-r-2 border-[#c0c0c0] bg-white py-[5px] pl-[3px] font-['Noto_Sans_Mono_CJK_SC','Noto_Sans_CJK_SC',monospace] leading-[14px] text-black outline-none"
        />
        <div className="w-[35px] shrink-0 bg-[#efefef] pt-1 pl-3">
          <button
            type="button"
            className="flex h-[104px] w-[23px] items-center justify-center rounded-l-sm bg-[#ff9500] px-[5px] leading-[17px] text-white"
          >
            个人数据
          </button>
        </div>
        <SchemePanel />
        <OptionsPanel />
      </div>

      {/* review marks */}
      <div className="pointer-events-none absolute top-[17px] left-[282px] h-[35px] w-[367px] border-[7px] border-[#ff3838]" />
      <p className="pointer-events-none absolute top-[144px] left-[349px] text-base leading-6 text-[#ff3838]">
        没有特征值的选项?
      </p>
    </section>
  );
}

/* ---------- status bar ---------- */

const statusItems = [
  "计税方式：增值税(一般计税方法)",
  "工程量清单项目计量规范(2013-四川)",
  "四川省房屋建筑与装饰工程量清单计价定额(2015)",
  "建筑装饰工程",
  "川建造价发〔2019〕181号",
  "浅 _ 欢 “",
];

function StatusBar() {
  return (
    <footer className="flex h-[26px] shrink-0 items-center justify-between border-t border-[#d4d4d4] bg-[#f4f4f4] pt-1 text-[#222]">
      <div className="flex items-center self-stretch">
        {statusItems.map((s, i) => (
          <span
            key={s}
            className={`border-r border-[#a8b0b8] pr-[26px] leading-[18px] whitespace-nowrap ${i === 0 ? "pl-2.5" : "pl-[17px]"}`}
          >
            {s}
          </span>
        ))}
        <button type="button" className="ml-6 h-[21px] w-20 rounded-sm bg-[#4499ff] text-white">
          0分
        </button>
      </div>
      <div className="flex items-center pr-1.5 text-[#555]">
        <button
          type="button"
          aria-label="上下布局"
          className="flex h-[21px] w-[22px] items-center justify-center rounded-sm border border-[#ddd] bg-white"
        >
          <Svg w={12} h={12}>
            <rect width="12" height="7" rx="1" fill={B} />
            <rect y="8" width="12" height="4" rx="1" fill={B} />
          </Svg>
        </button>
        <button type="button" aria-label="左右布局" className="ml-[9px]">
          <Svg w={13} h={12}>
            <rect width="6" height="12" rx="1" fill="#888" />
            <rect x="7" width="6" height="12" rx="1" fill="#888" />
          </Svg>
        </button>
        <span className="ml-[19px] text-[#222]">100%</span>
        <button type="button" aria-label="缩小" className="ml-2.5">
          <Svg w={13} h={13}>
            <path d="M1 6.500h11" stroke="currentColor" strokeWidth="2" />
          </Svg>
        </button>
        <input
          type="range"
          aria-label="缩放"
          min="0"
          max="100"
          defaultValue="35"
          className="mx-2.5 h-[13px] w-[107px] appearance-none bg-transparent [&::-webkit-slider-runnable-track]:h-0.5 [&::-webkit-slider-runnable-track]:bg-[#c8c8c8] [&::-webkit-slider-thumb]:-mt-[5px] [&::-webkit-slider-thumb]:size-3 [&::-webkit-slider-thumb]:appearance-none [&::-webkit-slider-thumb]:rounded-full [&::-webkit-slider-thumb]:border [&::-webkit-slider-thumb]:border-[#666] [&::-webkit-slider-thumb]:bg-white"
        />
        <button type="button" aria-label="放大">
          <Svg w={13} h={13}>
            <path d="M1 6.500h11M6.500 1v11" stroke="currentColor" strokeWidth="1.800" />
          </Svg>
        </button>
      </div>
    </footer>
  );
}

export default function App() {
  return (
    <div className="flex h-screen flex-col overflow-hidden bg-[#f4f4f4] font-['Noto_Sans_CJK_SC',sans-serif] text-xs">
      <TitleBar />
      <Ribbon />
      <main className="flex min-h-0 flex-1">
        <Sidebar />
        <section className="flex min-w-0 flex-1 flex-col">
          <SheetTabs />
          <BillGrid />
          <DetailPanel />
        </section>
      </main>
      <StatusBar />
    </div>
  );
}
